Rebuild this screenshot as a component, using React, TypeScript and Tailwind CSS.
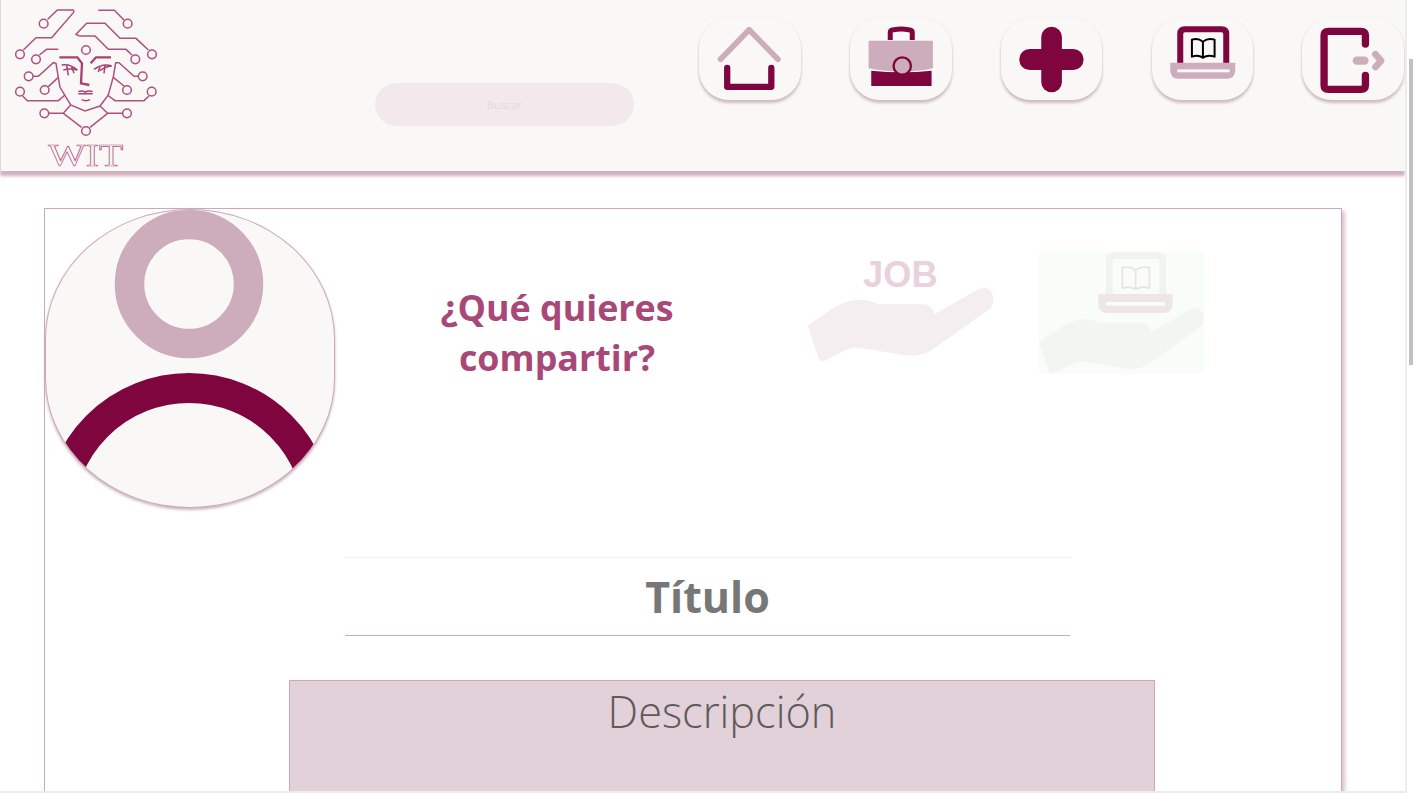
const WINE = "#7f053e";
const ROSE = "#cdadbb";

const HAND =
  "M55 272 L130 222 Q170 195 215 195 Q245 198 265 208 H400 Q432 208 436 238 L570 162 Q595 150 610 175 Q620 200 605 220 L425 348 Q395 368 350 362 L215 340 Q190 336 170 346 L105 378 Q95 382 88 370 Z";

function Logo() {
  const nodes = [
    [131, 71], [383, 71], [258, 150], [60, 163], [108, 178], [456, 163], [406, 178], [86, 229],
    [428, 229], [60, 275], [134, 270], [381, 270], [455, 275], [133, 340], [381, 340], [258, 393],
  ];
  const traces = [
    "M143 58 L172 30 H218 Q224 32 220 38 L155 113 H108 L70 150",
    "M295 31 H343 L372 60",
    "M238 108 L228 103 L260 70 H315 L360 115 H408 L445 150",
    "M238 108 H285 L325 148 H378 L396 165",
    "M118 165 L140 148 H175",
    "M99 229 H115 L160 188 L168 190 L180 262 L212 315 L255 333 L300 318 L325 285 L340 230 L347 188 L357 188 L402 229 H415",
    "M145 260 L175 232",
    "M372 258 L340 232",
    "M68 288 L82 302 H175 L195 285",
    "M447 288 L432 302 H345 L322 285",
    "M147 340 H190 L212 315",
    "M190 340 L245 382",
    "M368 340 H323 L300 318",
    "M323 340 L270 382",
  ];
  return (
    <svg viewBox="3 0 600 510" className="h-[170px] w-[200px] shrink-0 overflow-visible" aria-hidden>
      <g fill="none" stroke="#b0507f" strokeWidth="4.5">
        {traces.map((d) => (
          <path key={d} d={d} />
        ))}
        {nodes.map(([cx, cy]) => (
          <circle key={`${cx}-${cy}`} cx={cx} cy={cy} r="13" />
        ))}
        <g stroke="#a64372" strokeWidth="7">
          <path d="M178 172 H232 L246 190 L243 250 L268 255" />
          <path d="M272 190 L288 172 H333" />
        </g>
        <g stroke="#a64372" strokeWidth="4.5">
          <path d="M185 195 Q210 190 232 210 Q208 204 190 210" />
          <path d="M282 208 Q310 188 335 198 Q315 200 300 212" />
          <path d="M200 196 L205 226 M215 200 L222 220 M315 195 L312 220 M300 200 L295 216" />
          <path d="M235 275 Q245 270 256 276 Q266 270 278 275 M235 281 H278 M245 299 Q258 305 270 299" />
        </g>
      </g>
      <text
        x="145"
        y="498"
        textLength="225"
        lengthAdjust="spacingAndGlyphs"
        fontSize="96"
        fontFamily="'Liberation Serif', serif"
        fill="#faf8f7"
        stroke="#b0507f"
        strokeWidth="2"
      >
        WIT
      </text>
    </svg>
  );
}

function HomeIcon() {
  return (
    <svg viewBox="27 54 306 246" className="h-full w-full" aria-hidden>
      <path d="M92 178 L178 89 L265 178" fill="none" stroke={ROSE} strokeWidth="17" strokeLinecap="round" strokeLinejoin="round" />
      <path d="M112 204 V261 H245 V204" fill="none" stroke={WINE} strokeWidth="19" strokeLinecap="round" strokeLinejoin="round" />
    </svg>
  );
}

function CaseIcon() {
  return (
    <svg viewBox="480 54 303 246" className="h-full w-full" aria-hidden>
      <path d="M600 120 V97 Q600 90 610 89 Q633 85 655 89 Q666 90 666 97 V120" fill="none" stroke={WINE} strokeWidth="15" />
      <path d="M543 212 Q636 222 724 212 V258 H543 Z" fill={WINE} />
      <path d="M535 125 Q535 122 538 122 H726 Q728 122 728 125 V205 Q640 225 535 205 Z" fill={ROSE} />
      <circle cx="636" cy="198" r="26" fill={ROSE} stroke={WINE} strokeWidth="7" />
    </svg>
  );
}

function PlusIcon() {
  return (
    <svg viewBox="-117 54 303 246" className="h-full w-full" aria-hidden>
      <rect x="3" y="80" width="62" height="197" rx="31" fill={WINE} />
      <rect x="-63" y="147" width="193" height="63" rx="31" fill={WINE} />
    </svg>
  );
}

function LaptopIcon() {
  return (
    <svg viewBox="333 54 303 246" className="h-full w-full" aria-hidden>
      <path d="M417 195 V102 Q417 88 431 88 H541 Q555 88 555 102 V195" fill="none" stroke={WINE} strokeWidth="18" />
      <path d="M387 188 H582 V212 Q580 236 558 236 H410 Q389 236 387 212 Z" fill={ROSE} />
      <rect x="408" y="208" width="157" height="9" fill="#faf8f7" />
      <g fill="none" stroke="#000" strokeWidth="6" strokeLinejoin="round">
        <path d="M485 125 Q470 113 452 119 V170 Q470 163 485 173 Z" />
        <path d="M485 125 Q500 113 520 119 V170 Q500 163 485 173" />
      </g>
    </svg>
  );
}

function ExitIcon() {
  return (
    <svg viewBox="786 54 302 246" className="h-full w-full" aria-hidden>
      <path d="M975 132 V106 Q975 94 961 94 H864 Q851 94 851 106 V256 Q851 268 864 268 H961 Q975 268 975 256 V226" fill="none" stroke={WINE} strokeWidth="22" strokeLinecap="round" />
      <path d="M949 182 H972" fill="none" stroke={ROSE} strokeWidth="25" strokeLinecap="round" />
      <path d="M1005 163 L1022 182 L1005 201" fill="none" stroke={ROSE} strokeWidth="20" strokeLinecap="round" strokeLinejoin="round" />
    </svg>
  );
}

const NAV = [HomeIcon, CaseIcon, PlusIcon, LaptopIcon, ExitIcon];

function Header() {
  return (
    <header className="relative z-10 flex h-[171px] shrink-0 border-l border-[#e5d5dc] bg-[#faf8f7] shadow-[0_5px_3px_#cfb0bf]">
      <Logo />
      <input
        placeholder="Buscar"
        className="ml-[174px] mt-[83px] h-[43px] w-[259px] rounded-full bg-[#f3e9ec] text-center text-[11px] outline-none placeholder:text-[#e6d8dd]"
      />
      <nav className="ml-[65.3px] mt-[18px] flex h-[82px] gap-[49.25px]">
        {NAV.map((Icon, i) => (
          <button key={i} className="h-[82px] w-[101.5px] rounded-[30px] bg-[#faf8f7] shadow-[0_3px_3px_#cdbcc3,0_0_2px_#ebe6e8]">
            <Icon />
          </button>
        ))}
      </nav>
    </header>
  );
}

function Avatar() {
  return (
    <div className="h-[299px] w-[290px] shrink-0 overflow-hidden rounded-[145px/130px] border border-[#cba9b9] bg-[#faf8f7] shadow-[0_2px_3px_#c9b5bd]">
      <svg viewBox="0 0 288 297" className="h-full w-full" aria-hidden>
        <circle cx="143" cy="74" r="59.5" fill="none" stroke={ROSE} strokeWidth="29.5" />
        <circle cx="143" cy="308" r="130" fill="none" stroke={WINE} strokeWidth="30" />
      </svg>
    </div>
  );
}

function JobOffer() {
  return (
    <svg viewBox="54 60 561 325" className="ml-[100px] mt-[46px] h-[108px] w-[187px] shrink-0" aria-hidden>
      <path d={HAND} fill="#f4eef1" />
      <text x="222" y="156" fontSize="109" fontWeight="700" fontFamily="'Liberation Sans', sans-serif" fill="#e8d3dc">
        JOB
      </text>
    </svg>
  );
}

function CourseOffer() {
  return (
    <svg viewBox="747 52 495 364" className="ml-[45px] mt-[43px] h-[122px] w-[165px] shrink-0 bg-[#f9fdf7]" aria-hidden>
      <path d={HAND} transform="translate(698 80) scale(.885)" fill="#f3f6f0" />
      <path d="M958 185 V76 Q958 62 972 62 H1104 Q1118 62 1118 76 V185" fill="none" stroke="#f2f3ee" strokeWidth="20" />
      <path d="M925 177 H1148 V208 Q1146 234 1120 234 H952 Q927 234 925 208 Z" fill="#eee6e4" />
      <rect x="948" y="201" width="177" height="11" fill="#f9fdf7" />
      <g fill="none" stroke="#e9e3e0" strokeWidth="5" strokeLinejoin="round">
        <path d="M1037 105 Q1018 92 997 98 V160 Q1018 152 1037 163 Z" />
        <path d="M1037 105 Q1056 92 1078 98 V160 Q1056 152 1037 163" />
      </g>
    </svg>
  );
}

export default function App() {
  return (
    <div className="flex h-screen w-full overflow-hidden bg-white font-['Open_Sans',sans-serif] antialiased">
      <div className="flex h-[791px] w-[1405px] shrink-0 flex-col overflow-hidden">
        <Header />
        <main className="pl-[44px] pt-[37px]">
          <section className="h-[700px] w-[1298px] border border-[#cba9b9] shadow-[3px_3px_4px_#d9c3cd]">
            <div className="flex h-[348px]">
              <Avatar />
              <h2 className="ml-[72px] mt-[73px] w-[300px] text-center text-[35.8px] font-bold leading-[50px] text-[#a84878]">
                ¿Qué quieres compartir?
              </h2>
              <JobOffer />
              <CourseOffer />
            </div>
            <div className="ml-[300px] w-[725px] border-y border-t-[#f0eeee] border-b-[#cba9b9] text-center text-[43px] font-bold leading-[77px] text-[#777777]">
              Título
            </div>
            <div className="ml-[244px] mt-[44px] h-[300px] w-[866px] border border-[#cba9b9] bg-[#e2d1d8] pt-px text-center text-[43.3px] font-light leading-[60px] text-[#5f5a5c]">
              Descripción
            </div>
          </section>
        </main>
      </div>
      <div className="flex-1 border-l-2 border-[#ececec] pl-[2px] pt-[59px]">
        <div className="h-[306px] bg-[#c1c1c1]" />
      </div>
      <div className="fixed bottom-0 left-0 h-[3px] w-[1407px] border-t-2 border-[#ececec] bg-white" />
    </div>
  );
}
